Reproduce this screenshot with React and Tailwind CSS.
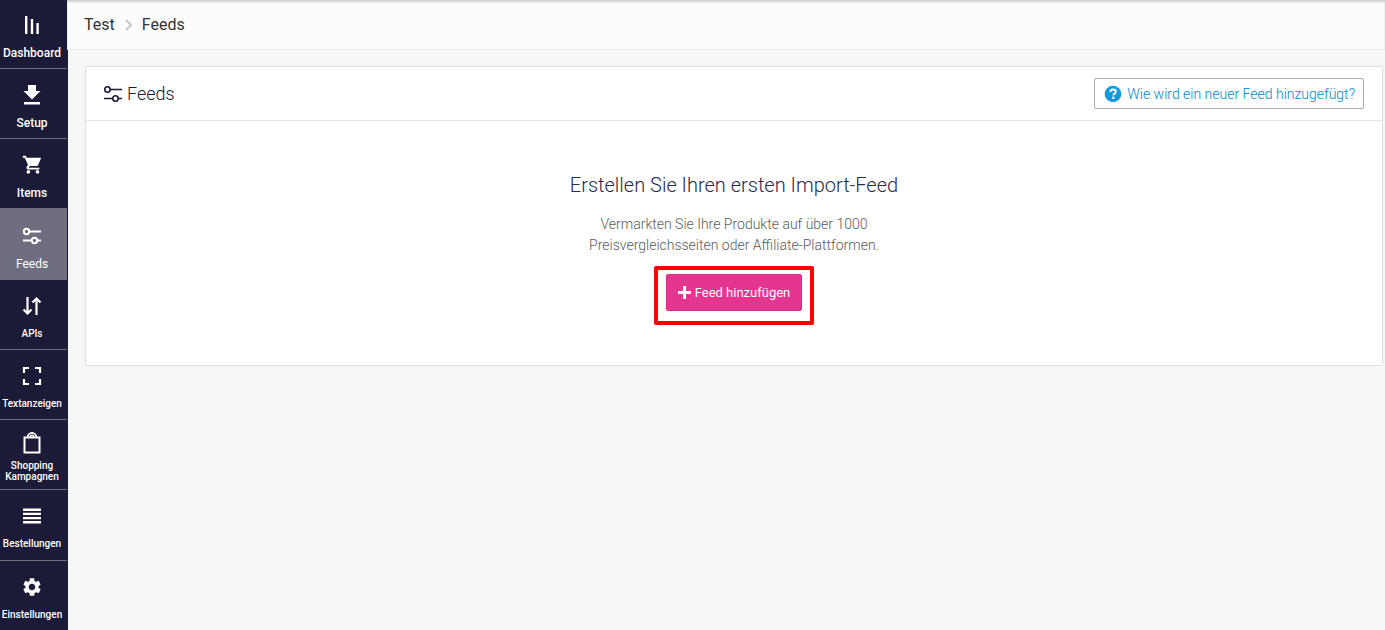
import React from "react";

function BarsIcon() {
  return (
    <svg width="20" height="20" viewBox="0 0 20 20" fill="currentColor" aria-hidden="true">
      <path d="M3 1h2.4v18H3zM8.800 4h2.400v15H8.800zM14.400 8h2.400v11h-2.400z" />
    </svg>
  );
}

function DownloadIcon() {
  return (
    <svg width="20" height="20" viewBox="0 0 20 20" fill="currentColor" aria-hidden="true">
      <path d="M6 0h8v6h4.500L10 14.500 1.500 6H6zM2 17h16v2.500H2z" />
    </svg>
  );
}

function CartIcon() {
  return (
    <svg width="22" height="22" viewBox="0 0 24 24" fill="currentColor" aria-hidden="true">
      <path d="M8 17.500a2 2 0 1 0 0 4 2 2 0 0 0 0-4zM2 2v2h2l3.600 7.600-1.400 2.400c-.8 1.500.3 3 1.800 3h12v-2H8.400l1.100-2h7.500c.8 0 1.400-.4 1.700-1L22 4H6.200l-.9-2zM18 17.500a2 2 0 1 0 0 4 2 2 0 0 0 0-4z" />
    </svg>
  );
}

function SlidersIcon({ strokeWidth = 1.6 }) {
  return (
    <svg width="20" height="20" viewBox="0 0 20 20" fill="none" stroke="currentColor" strokeWidth={strokeWidth} aria-hidden="true">
      <circle cx="4.500" cy="5.500" r="2.700" />
      <path d="M7.200 5.500H19M1 14.500h8.600M15.200 14.500H19" />
      <circle cx="12.500" cy="14.500" r="2.700" />
    </svg>
  );
}

function ArrowsIcon() {
  return (
    <svg width="20" height="20" viewBox="0 0 20 20" fill="none" stroke="currentColor" strokeWidth="2.200" aria-hidden="true">
      <path d="M5.500 1v16.500M1.500 13.500l4 4 4-4M14.500 19V2.500M10.500 6.500l4-4 4 4" />
    </svg>
  );
}

function FrameIcon() {
  return (
    <svg width="20" height="20" viewBox="0 0 20 20" fill="none" stroke="currentColor" strokeWidth="2.200" aria-hidden="true">
      <path d="M2 7V2h5M13 2h5v5M18 13v5h-5M7 18H2v-5" />
    </svg>
  );
}

function BagIcon() {
  return (
    <svg width="20" height="22" viewBox="0 0 20 22" fill="none" stroke="currentColor" strokeWidth="2" aria-hidden="true">
      <path d="M2.500 5.500h15v15h-15z" />
      <path d="M5.500 5.500a4.500 4.500 0 0 1 9 0" strokeWidth="1.800" />
      <path d="M8 5.500a2 2 0 0 1 4 0" strokeWidth="1.400" />
    </svg>
  );
}

function LinesIcon() {
  return (
    <svg width="20" height="20" viewBox="0 0 20 20" fill="currentColor" aria-hidden="true">
      <path d="M1 2.500h18v2.400H1zM1 6.700h18v2.400H1zM1 10.900h18v2.400H1zM1 15.100h18v2.400H1z" />
    </svg>
  );
}

function GearIcon() {
  return (
    <svg width="22" height="22" viewBox="0 0 24 24" fill="currentColor" aria-hidden="true">
      <path d="M19.140 12.940c.04-.3.06-.61.06-.94 0-.32-.02-.64-.07-.94l2.030-1.580c.18-.14.23-.41.12-.61l-1.920-3.320c-.12-.22-.37-.29-.59-.22l-2.390.96c-.5-.38-1.030-.7-1.620-.94l-.36-2.540c-.04-.24-.24-.41-.48-.41h-3.840c-.24 0-.43.17-.47.41l-.36 2.540c-.59.24-1.130.57-1.620.94l-2.390-.96c-.22-.08-.47 0-.59.22L2.740 8.870c-.12.21-.08.47.12.61l2.030 1.580c-.05.3-.09.63-.09.94s.02.64.07.94l-2.030 1.580c-.18.14-.23.41-.12.61l1.920 3.320c.12.22.37.29.59.22l2.390-.96c.5.38 1.030.7 1.620.94l.36 2.540c.05.24.24.41.48.41h3.840c.24 0 .44-.17.47-.41l.36-2.540c.59-.24 1.130-.56 1.620-.94l2.390.96c.22.08.47 0 .59-.22l1.920-3.320c.12-.22.07-.47-.12-.61l-2.010-1.580zM12 15.600c-1.980 0-3.600-1.620-3.600-3.600s1.620-3.600 3.600-3.600 3.600 1.620 3.600 3.600-1.620 3.600-3.600 3.600z" />
    </svg>
  );
}

const navItems = [
  { label: "Dashboard", icon: <BarsIcon />, box: "h-[69px] pt-3.5", text: "text-xs" },
  { label: "Setup", icon: <DownloadIcon />, box: "h-[70px] pt-[15px]", text: "text-xs" },
  { label: "Items", icon: <CartIcon />, box: "h-[70px] pt-[15px]", text: "text-xs" },
  { label: "Feeds", icon: <SlidersIcon strokeWidth={2} />, box: "h-[71px] pt-4", text: "text-xs", active: true },
  { label: "APIs", icon: <ArrowsIcon />, box: "h-[70px] pt-[15px]", text: "text-[10px]" },
  { label: "Textanzeigen", icon: <FrameIcon />, box: "h-[70px] pt-[15px]", text: "text-[10px]" },
  { label: "Shopping Kampagnen", icon: <BagIcon />, box: "h-[70px] pt-3", text: "text-[10px]", wrap: true },
  { label: "Bestellungen", icon: <LinesIcon />, box: "h-[71px] pt-[15px]", text: "text-[10px]" },
  { label: "Einstellungen", icon: <GearIcon />, box: "h-[70px] pt-[15px]", text: "text-[10px]" },
];

function Sidebar() {
  return (
    <nav aria-label="Hauptmenü" className="w-[67px] shrink-0 bg-[#1b1a37]">
      <ul>
        {navItems.map((item) => (
          <li key={item.label}>
            <a
              href="#"
              aria-current={item.active ? "page" : undefined}
              className={`flex flex-col items-center border-b border-[#6f6e80] pr-[3px] text-white ${item.box} ${item.active ? "bg-[#6f6e80]" : "font-medium"}`}
            >
              <span className="flex h-[22px] items-center justify-center">{item.icon}</span>
              <span
                className={`text-center ${item.text} ${item.wrap ? "mt-1.5 leading-[11px]" : "mt-[9px] leading-4"}`}
              >
                {item.label}
              </span>
            </a>
          </li>
        ))}
      </ul>
    </nav>
  );
}

function Header() {
  return (
    <header className="flex h-[50px] items-center border-b border-[#ebebeb] bg-[#fcfcfc] px-[17px] shadow-[inset_0_2px_2px_#d0d0d0]">
      <nav aria-label="Brotkrümel">
        <ol className="flex items-center text-base text-[#333]">
          <li>
            <a href="#">Test</a>
          </li>
          <li className="mx-2.5 text-[#c8c8c8]" aria-hidden="true">
            <svg width="7" height="12" viewBox="0 0 7 12" fill="none" stroke="currentColor" strokeWidth="2.200">
              <path d="M1 1l5 5-5 5" />
            </svg>
          </li>
          <li aria-current="page">Feeds</li>
        </ol>
      </nav>
    </header>
  );
}

export default function App() {
  return (
    <div className="flex min-h-screen bg-[#f7f7f7] font-['Roboto',sans-serif]">
      <Sidebar />
      <div className="flex min-w-0 flex-1 flex-col">
        <Header />
        <main className="flex-1 border-l border-[#1b1a37] pt-4 pr-0.5 pl-[17px]">
          <section className="rounded-xs border border-[#dfdfdf] bg-white">
            <div className="flex h-[54px] items-center justify-between border-b border-[#e4e4e4] pr-[18px] pl-[17px]">
              <h1 className="flex items-center gap-1 text-lg font-light text-[#1b1a37]">
                <SlidersIcon />
                Feeds
              </h1>
              <a
                href="#"
                className="flex h-[31px] items-center gap-1 rounded-xs border border-[#aaa9b8] px-2 text-sm font-light text-[#0089cc]"
              >
                <svg width="20" height="20" viewBox="0 0 20 20" aria-hidden="true">
                  <circle cx="10" cy="10" r="8.300" fill="#119bdc" />
                  <path d="M7.300 8.100c0-1.700 1.200-2.700 2.800-2.700s2.700 1 2.700 2.300c0 2-2.400 1.900-2.400 3.600" fill="none" stroke="#fff" strokeWidth="2" />
                  <circle cx="10.300" cy="13.700" r="1.200" fill="#fff" />
                </svg>
                Wie wird ein neuer Feed hinzugefügt?
              </a>
            </div>
            <div className="flex flex-col items-center pt-[50px] pb-10 text-center">
              <h2 className="text-xl font-light text-[#2c2b48]">Erstellen Sie Ihren ersten Import-Feed</h2>
              <p className="mt-[15px] text-sm leading-[21px] font-light text-[#5c5c5c]">
                Vermarkten Sie Ihre Produkte auf über 1000
                <br />
                Preisvergleichsseiten oder Affiliate-Plattformen.
              </p>
              <div className="mt-2.5 rounded-xs border-4 border-[#ff0000] px-2 pt-1 pb-2.5">
                <button
                  type="button"
                  className="flex h-[37px] items-center gap-1 rounded-xs border border-[#db2b85] bg-[#e5368f] px-[11px] text-[13px] text-white"
                >
                  <svg width="13" height="13" viewBox="0 0 13 13" fill="currentColor" aria-hidden="true">
                    <path d="M5 0h3v5h5v3H8v5H5V8H0V5h5z" />
                  </svg>
                  Feed hinzufügen
                </button>
              </div>
            </div>
          </section>
        </main>
      </div>
    </div>
  );
}
